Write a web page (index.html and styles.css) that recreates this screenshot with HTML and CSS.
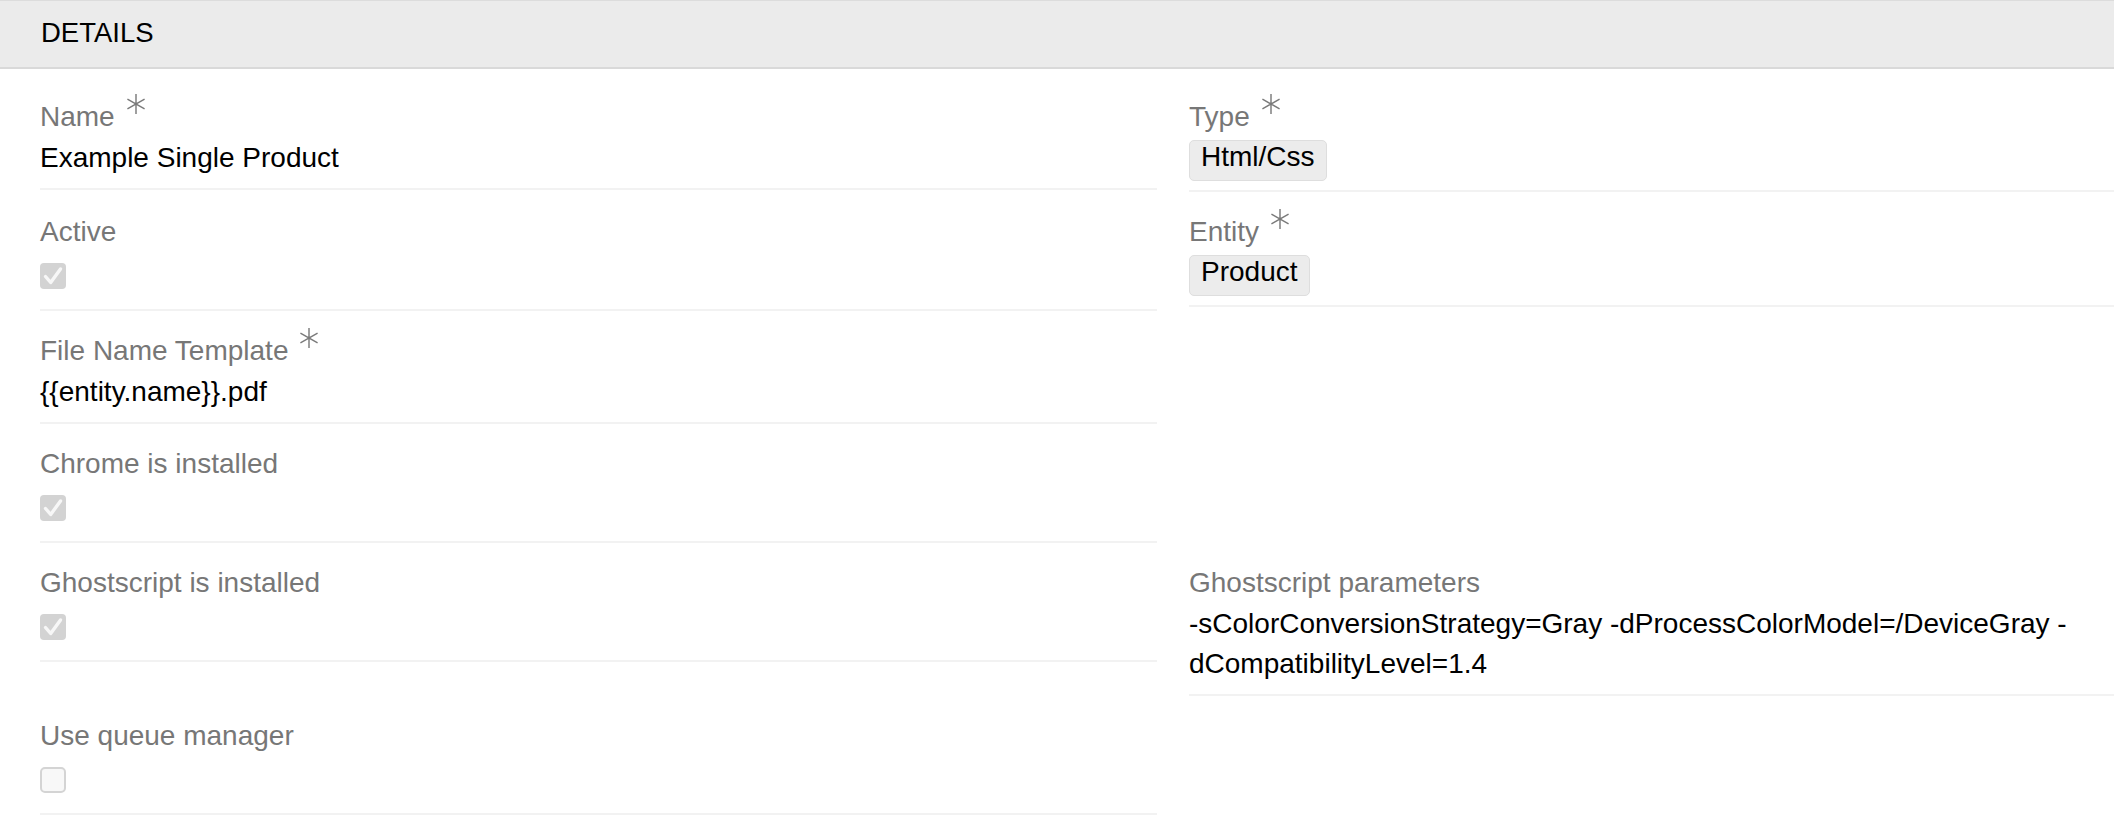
FILE: index.html
```html
<!DOCTYPE html>
<html lang="en">
<head>
<meta charset="utf-8">
<title>Details</title>
<link rel="stylesheet" href="styles.css">
</head>
<body>
<div class="panel">
  <div class="panel-heading">DETAILS</div>
  <div class="panel-body">
    <div class="grid">
      <div class="field">
        <div class="label">Name<svg class="req" viewBox="0 0 20 20"><path d="M10 1V19M2.2 5.5L17.8 14.5M2.2 14.5L17.8 5.5"/></svg></div>
        <div class="value">Example Single Product</div>
      </div>
      <div class="field">
        <div class="label">Type<svg class="req" viewBox="0 0 20 20"><path d="M10 1V19M2.2 5.5L17.8 14.5M2.2 14.5L17.8 5.5"/></svg></div>
        <div class="value value-badge"><span class="badge">Html/Css</span></div>
      </div>

      <div class="field">
        <div class="label">Active</div>
        <div class="checkbox-row"><span class="cb checked"><svg viewBox="0 0 26 26"><path d="M5.5 13.5L10.7 19.5L20.5 6"/></svg></span></div>
      </div>
      <div class="field">
        <div class="label">Entity<svg class="req" viewBox="0 0 20 20"><path d="M10 1V19M2.2 5.5L17.8 14.5M2.2 14.5L17.8 5.5"/></svg></div>
        <div class="value value-badge"><span class="badge">Product</span></div>
      </div>

      <div class="field">
        <div class="label">File Name Template<svg class="req" viewBox="0 0 20 20"><path d="M10 1V19M2.2 5.5L17.8 14.5M2.2 14.5L17.8 5.5"/></svg></div>
        <div class="value">{{entity.name}}.pdf</div>
      </div>
      <div class="empty"></div>

      <div class="field">
        <div class="label">Chrome is installed</div>
        <div class="checkbox-row"><span class="cb checked"><svg viewBox="0 0 26 26"><path d="M5.5 13.5L10.7 19.5L20.5 6"/></svg></span></div>
      </div>
      <div class="empty"></div>

      <div class="field">
        <div class="label">Ghostscript is installed</div>
        <div class="checkbox-row"><span class="cb checked"><svg viewBox="0 0 26 26"><path d="M5.5 13.5L10.7 19.5L20.5 6"/></svg></span></div>
      </div>
      <div class="field">
        <div class="label">Ghostscript parameters</div>
        <div class="value">-sColorConversionStrategy=Gray -dProcessColorModel=/DeviceGray -<wbr>dCompatibilityLevel=1.4</div>
      </div>

      <div class="field">
        <div class="label">Use queue manager</div>
        <div class="checkbox-row"><span class="cb unchecked"></span></div>
      </div>
      <div class="empty"></div>
    </div>
  </div>
</div>
</body>
</html>
```
FILE: styles.css
```css
html, body {
  margin: 0;
  padding: 0;
  overflow: hidden;
  background: #ffffff;
}

body {
  font-family: "Liberation Sans", Arial, Helvetica, sans-serif;
  color: #000000;
}

.panel-heading {
  height: 66px;
  line-height: 64px;
  padding: 0 41px;
  font-size: 27.5px;
  color: #000000;
  background: #ebebeb;
  border-top: 1px solid #dcdcdc;
  border-bottom: 2px solid #d9d9d9;
}

.panel-body {
  padding: 8px 0 0 40px;
}

.grid {
  display: grid;
  grid-template-columns: 1117px 1117px;
  column-gap: 32px;
  align-items: start;
}

.field {
  padding: 19px 0 10px;
  border-bottom: 2px solid #f2f2f2;
}

.label {
  font-size: 28px;
  line-height: 42px;
  color: #777777;
  white-space: nowrap;
}

.req {
  width: 22px;
  height: 22px;
  margin-top: -6px;
  margin-left: 10px;
  vertical-align: 11px;
  fill: none;
  stroke: #7a7a7a;
  stroke-width: 1.3;
}

.value {
  font-size: 28px;
  line-height: 40px;
  color: #000000;
}

.value-badge {
  height: 42px;
}

.badge {
  display: inline-block;
  padding: 0 11px 7px;
  line-height: 32px;
  vertical-align: 1px;
  background: #ececec;
  border: 1px solid #dedede;
  border-radius: 5px;
}

.checkbox-row {
  padding: 10px 0;
  line-height: 0;
}

.cb {
  display: inline-block;
  width: 26px;
  height: 26px;
  box-sizing: border-box;
  border-radius: 4px;
}

.cb svg {
  width: 26px;
  height: 26px;
  fill: none;
  stroke: #f7f7f7;
  stroke-width: 3.4;
  stroke-linecap: round;
  stroke-linejoin: round;
}

.cb.checked {
  background: #d3d3d3;
}

.cb.unchecked {
  background: #f8f8f8;
  border: 2px solid #d4d4d4;
  border-radius: 5px;
}
```
